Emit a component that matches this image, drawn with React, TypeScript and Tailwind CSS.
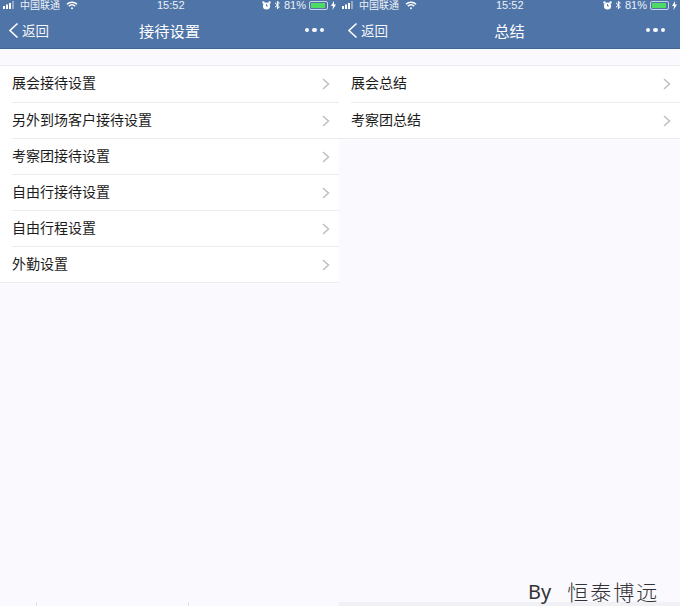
const font = { fontFamily: '"Noto Sans CJK SC", "Liberation Sans", sans-serif' };
const latin = { fontFamily: '"Liberation Sans", sans-serif' };

function StatusBar() {
  return (
    <div className="flex h-[10px] items-center justify-between text-[10px] leading-[10px] text-white/90">
      <div className="flex items-center gap-[4px]">
        <svg width="13" height="8" viewBox="0 0 13 8" className="ml-[3px]">
          <rect x="0" y="5" width="2" height="3" fill="#fff" />
          <rect x="3" y="3.5" width="2" height="4.5" fill="#fff" />
          <rect x="6" y="2" width="2" height="6" fill="#fff" />
          <rect x="9" y="0" width="2" height="8" fill="#fff" opacity="0.4" />
        </svg>
        <span>中国联通</span>
        <svg width="12" height="9" viewBox="0 0 13 9" className="ml-[2px]" fill="none" stroke="#fff" strokeWidth="1.6">
          <path d="M1 3.2C4.2 0.3 8.8 0.3 12 3.2" />
          <path d="M3 5.2C5 3.4 8 3.4 10 5.2" />
          <circle cx="6.5" cy="7.4" r="1.1" fill="#fff" stroke="none" />
        </svg>
      </div>
      <span className="absolute left-[157px] text-[11px]" style={latin}>15:52</span>
      <div className="flex items-center gap-[3px] pr-[3px]">
        <svg width="9" height="9" viewBox="0 0 9 9">
          <circle cx="4.5" cy="5" r="3.6" fill="#fff" />
          <circle cx="1.5" cy="1.5" r="1.2" fill="#fff" />
          <circle cx="7.5" cy="1.5" r="1.2" fill="#fff" />
          <path d="M4.5 3V5H6" stroke="#4f74a8" strokeWidth="0.9" fill="none" />
        </svg>
        <svg width="7" height="10" viewBox="0 0 7 10" fill="none" stroke="#fff" strokeWidth="1">
          <path d="M1 2.8L5.4 6.8L3.4 8.8V1.2L5.4 3.2L1 7.2" />
        </svg>
        <span className="text-[11px]" style={latin}>81%</span>
        <div className="flex h-[9px] w-[19px] rounded-[2px] border border-white/70 p-px">
          <div className="h-full w-[14px] bg-[#4cd964]" />
        </div>
        <svg width="5" height="9" viewBox="0 0 5 9">
          <path d="M3 0L0 5H2L1.5 9L5 3.6H3Z" fill="#fff" />
        </svg>
      </div>
    </div>
  );
}

function Chevron() {
  return (
    <svg width="8" height="12" viewBox="0 0 8 12" fill="none" stroke="#c0c0c5" strokeWidth="1.6">
      <path d="M1 1L6.5 6L1 11" />
    </svg>
  );
}

function Phone({ title, items }: { title: string; items: string[] }) {
  return (
    <div className="relative flex flex-col">
      <div className="relative h-[49px] border-b border-[#3f6496] bg-[#4f74a8]">
        <StatusBar />
        <div className="relative mt-[2px] flex h-[36px] items-center justify-center">
          <div className="absolute left-[8px] flex items-center gap-[3px] text-[13.5px] text-white/95">
            <svg width="11" height="17" viewBox="0 0 11 17" fill="none" stroke="#fff" strokeWidth="1.6">
              <path d="M9.5 1.5L2 8.5L9.5 15.5" />
            </svg>
            <span>返回</span>
          </div>
          <span className="text-[15.25px] text-white">{title}</span>
          <div className="absolute right-[15px] flex gap-[3px]">
            <span className="h-[4.5px] w-[4.5px] rounded-full bg-white/95" />
            <span className="h-[4.5px] w-[4.5px] rounded-full bg-white/95" />
            <span className="h-[4.5px] w-[4.5px] rounded-full bg-white/95" />
          </div>
        </div>
      </div>
      <div className="mt-[16px] border-y border-[#ececf0] bg-white">
        {items.map((item, i) => (
          <div
            key={item}
            className={`ml-[12px] flex h-[36px] items-center justify-between pr-[9px] text-[14px] text-[#1c1c1c] ${
              i > 0 ? "border-t border-[#ececec]" : ""
            }`}
          >
            <span className="pb-[3px]">{item}</span>
            <Chevron />
          </div>
        ))}
      </div>
    </div>
  );
}

export default function App() {
  return (
    <div style={font} className="relative h-[606px] w-[680px] overflow-hidden bg-[#faf9fe]">
      <div className="grid grid-cols-[339px_341px]">
        <Phone
          title="接待设置"
          items={["展会接待设置", "另外到场客户接待设置", "考察团接待设置", "自由行接待设置", "自由行程设置", "外勤设置"]}
        />
        <Phone title="总结" items={["展会总结", "考察团总结"]} />
      </div>
      <div className="absolute bottom-0 left-[339px] h-[4px] w-[341px] bg-[#f0f0f5]" />
      <div className="absolute bottom-0 left-[36px] h-[4px] w-px bg-[#e4e4e8]" />
      <div className="absolute bottom-0 left-[188px] h-[4px] w-px bg-[#e4e4e8]" />
      <div className="absolute bottom-[4px] left-[528px] flex items-center gap-[16px] text-[#333]">
        <span className="text-[20px] leading-none" style={{ fontFamily: '"Noto Sans", sans-serif' }}>By</span>
        <span className="text-[21px] leading-none tracking-[2px]" style={{ fontFamily: '"Noto Sans CJK SC", serif', fontWeight: 300 }}>恒泰博远</span>
      </div>
    </div>
  );
}
